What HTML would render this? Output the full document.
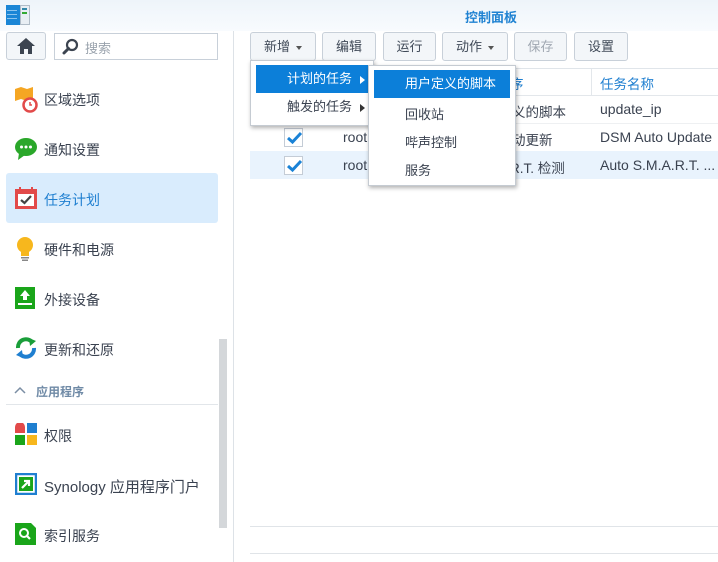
<!DOCTYPE html>
<html><head><meta charset="utf-8"><style>
*{margin:0;padding:0;box-sizing:border-box}
body{width:718px;height:562px;overflow:hidden;background:#fff;font-family:"Liberation Sans","Noto Sans CJK SC",sans-serif;font-size:13px;color:#404a58;position:relative}
.a{position:absolute}
.title{left:0;top:0;width:718px;height:31px;background:linear-gradient(#eef4fa,#f8fbfe)}
.btn{position:absolute;top:32px;height:29px;border:1px solid #c8d0d9;border-radius:3px;background:#f3f6f9;line-height:27px;text-align:center;font-size:13px;color:#404a58}
.car{display:inline-block;width:0;height:0;border-left:3.5px solid transparent;border-right:3.5px solid transparent;border-top:4px solid #555;vertical-align:middle;margin-left:6px}
.nav{position:absolute;left:44px;font-size:14px;color:#3a4250}
.ic{position:absolute;left:15px;width:22px;height:22px}
.menu{background:#fff;border:1px solid #c5cbd2;box-shadow:1px 2px 4px rgba(0,0,0,.3)}
.tri{display:inline-block;width:0;height:0;border-top:4px solid transparent;border-bottom:4px solid transparent;border-left:5px solid #333;margin-left:8px;vertical-align:middle}
.cb{position:absolute;left:284px;width:19px;height:19px;border:1px solid #c4ccd6;background:#fff}
.row{position:absolute;left:250px;width:468px;height:28px}
.cell{position:absolute;font-size:13.5px;color:#3a4250}
</style></head><body>
<div class="a title"></div>
<!-- app icon -->
<div class="a" style="left:6px;top:5px;width:18px;height:20px;background:#1b86d6"></div>
<div class="a" style="left:7px;top:10px;width:10px;height:1px;background:#8cc4ee"></div>
<div class="a" style="left:7px;top:14px;width:10px;height:1px;background:#8cc4ee"></div>
<div class="a" style="left:7px;top:18px;width:10px;height:1px;background:#8cc4ee"></div>
<div class="a" style="left:20px;top:5px;width:10px;height:20px;background:#e8eef4;border:1px solid #b0bcc8"></div>
<div class="a" style="left:22px;top:8px;width:5px;height:2px;background:#38a;"></div>
<div class="a" style="left:22px;top:12px;width:5px;height:2px;background:#3a3"></div>
<div class="a" style="left:491px;top:7px;transform:translateX(-50%);font-size:13px;font-weight:bold;color:#1f82d2;white-space:nowrap">控制面板</div>

<!-- left top -->
<div class="a" style="left:6px;top:32px;width:40px;height:28px;border:1px solid #c8d0d9;border-radius:3px;background:#f3f6f9"></div>
<svg class="a" style="left:16px;top:37px" width="20" height="18" viewBox="0 0 20 18"><path d="M10 1 L1 9 H4 V17 H8 V12 H12 V17 H16 V9 H19 Z" fill="#3c4450"/></svg>
<div class="a" style="left:54px;top:33px;width:164px;height:27px;border:1px solid #c8d0d9;background:#fff"></div>
<svg class="a" style="left:62px;top:38px" width="17" height="17" viewBox="0 0 17 17"><circle cx="10" cy="7" r="5" fill="none" stroke="#3c4450" stroke-width="2.2"/><path d="M6.5 10.5 L2 15" stroke="#3c4450" stroke-width="3" stroke-linecap="round"/></svg>
<div class="a" style="left:85px;top:38px;color:#9aa3ad;font-size:13px">搜索</div>

<!-- nav -->
<div class="a" style="left:6px;top:173px;width:212px;height:50px;background:#d9ecfd;border-radius:3px"></div>
<div class="ic" style="top:87px"><svg width="24" height="26" viewBox="0 0 24 26"><path d="M0 2 L6 0 L12 2 L18 0 V12 L12 14 L6 12 L0 14Z" fill="#f5a623"/><circle cx="15" cy="18" r="6.5" fill="#fff" stroke="#e24a4a" stroke-width="2.5"/><path d="M15 15 V18 H17" stroke="#e24a4a" stroke-width="1.5" fill="none"/></svg></div>
<div class="nav" style="top:90px">区域选项</div>
<div class="ic" style="top:137px"><svg width="24" height="24" viewBox="0 0 24 24"><ellipse cx="11" cy="10" rx="11" ry="9" fill="#2aa72a"/><path d="M4 16 L3 23 L10 18Z" fill="#2aa72a"/><circle cx="6.5" cy="10" r="1.5" fill="#fff"/><circle cx="11" cy="10" r="1.5" fill="#fff"/><circle cx="15.5" cy="10" r="1.5" fill="#fff"/></svg></div>
<div class="nav" style="top:140px">通知设置</div>
<div class="ic" style="top:187px"><svg width="24" height="24" viewBox="0 0 24 24"><rect x="0" y="2" width="22" height="20" fill="#e24a4a"/><rect x="3" y="7" width="16" height="12" fill="#fff"/><rect x="4" y="0" width="2" height="4" fill="#e24a4a"/><rect x="16" y="0" width="2" height="4" fill="#e24a4a"/><path d="M6 13 L9.5 16 L16 9" stroke="#444" stroke-width="2.2" fill="none"/></svg></div>
<div class="nav" style="top:190px;color:#1f7fd0">任务计划</div>
<div class="ic" style="top:236px"><svg width="24" height="26" viewBox="0 0 24 26"><circle cx="10" cy="9" r="8" fill="#f7b71d"/><rect x="6" y="15" width="8" height="5" fill="#f7b71d"/><rect x="6" y="21" width="8" height="1.5" fill="#888"/><rect x="7" y="23.5" width="6" height="1.5" fill="#888"/></svg></div>
<div class="nav" style="top:240px">硬件和电源</div>
<div class="ic" style="top:287px"><svg width="22" height="22" viewBox="0 0 22 22"><rect width="20" height="22" fill="#1aa51a"/><path d="M10 3 L15 9 H12 V13 H8 V9 H5Z" fill="#fff"/><rect x="3" y="16" width="14" height="2" fill="#fff"/></svg></div>
<div class="nav" style="top:290px">外接设备</div>
<div class="ic" style="top:337px"><svg width="24" height="22" viewBox="0 0 24 22"><path d="M3 11 A8 8 0 0 1 17 5" stroke="#1a9e3a" stroke-width="4" fill="none"/><path d="M14 1 L21 4 L15 9Z" fill="#1a9e3a"/><path d="M19 11 A8 8 0 0 1 5 17" stroke="#1f7fd0" stroke-width="4" fill="none"/><path d="M8 21 L1 18 L7 13Z" fill="#1f7fd0"/></svg></div>
<div class="nav" style="top:340px">更新和还原</div>
<svg class="a" style="left:14px;top:386px" width="12" height="8" viewBox="0 0 12 8"><path d="M1 7 L6 2 L11 7" stroke="#7b8ea4" stroke-width="1.5" fill="none"/></svg>
<div class="a" style="left:36px;top:383px;font-size:12px;font-weight:bold;color:#6f8aa6">应用程序</div>
<div class="a" style="left:6px;top:404px;width:212px;height:1px;background:#e2e6ea"></div>
<div class="ic" style="top:423px"><svg width="22" height="22" viewBox="0 0 22 22"><path d="M0 10 V4 A5 5 0 0 1 10 4 V10Z" fill="#e24a4a"/><rect x="12" y="0" width="10" height="10" fill="#1f7fd0"/><rect x="0" y="12" width="10" height="10" fill="#1aa51a"/><rect x="12" y="12" width="10" height="10" fill="#f7b71d"/></svg></div>
<div class="nav" style="top:426px">权限</div>
<div class="ic" style="top:473px"><svg width="22" height="22" viewBox="0 0 22 22"><rect x="1" y="1" width="20" height="20" fill="#fff" stroke="#1f7fd0" stroke-width="2.5"/><rect x="4" y="4" width="14" height="14" fill="#1aa51a"/><path d="M7 15 L13 9 M9 8 H14 V13" stroke="#fff" stroke-width="2.2" fill="none"/></svg></div>
<div class="nav" style="top:476px;font-size:15px">Synology 应用程序门户</div>
<div class="ic" style="top:523px"><svg width="22" height="22" viewBox="0 0 22 22"><path d="M0 0 H16 L21 5 V22 H0Z" fill="#1aa51a"/><circle cx="9" cy="10" r="4" fill="none" stroke="#fff" stroke-width="2"/><path d="M12 13 L15 16" stroke="#fff" stroke-width="2.2"/></svg></div>
<div class="nav" style="top:526px">索引服务</div>
<div class="a" style="left:219px;top:339px;width:8px;height:189px;background:#d4d7da"></div>
<div class="a" style="left:233px;top:31px;width:1px;height:531px;background:#dde2e7"></div>

<!-- toolbar -->
<div class="btn" style="left:250px;width:66px">新增<span class="car"></span></div>
<div class="btn" style="left:322px;width:54px">编辑</div>
<div class="btn" style="left:383px;width:53px">运行</div>
<div class="btn" style="left:442px;width:66px">动作<span class="car"></span></div>
<div class="btn" style="left:514px;width:53px;color:#a0a8b2">保存</div>
<div class="btn" style="left:574px;width:54px">设置</div>

<!-- table -->
<div class="a" style="left:250px;top:68px;width:468px;height:1px;background:#e0e5ea"></div>
<div class="a" style="left:250px;top:95px;width:468px;height:1px;background:#e3e7eb"></div>
<div class="a" style="left:591px;top:69px;width:1px;height:26px;background:#e3e7eb"></div>
<div class="cell" style="left:600px;top:73px;color:#1f7fd0">任务名称</div>
<div class="cell" style="left:510px;top:73px;color:#1f7fd0">序</div>
<div class="cell" style="left:512px;top:101px">义的脚本</div>
<div class="cell" style="left:600px;top:101px;font-size:14px">update_ip</div>
<div class="a" style="left:250px;top:123px;width:468px;height:1px;background:#eef0f2"></div>
<div class="cb" style="top:128px"></div>
<svg class="a" style="left:285px;top:128px" width="19" height="19" viewBox="0 0 19 19"><path d="M3 10 L7.5 14 L16 5" stroke="#1a82d6" stroke-width="3" fill="none"/></svg>
<div class="cell" style="left:343px;top:129px;font-size:14px">root</div>
<div class="cell" style="left:512px;top:129px">动更新</div>
<div class="cell" style="left:600px;top:129px;font-size:14px">DSM Auto Update</div>
<div class="row" style="top:151px;background:#e9f3fd"></div>
<div class="cb" style="top:156px"></div>
<svg class="a" style="left:285px;top:156px" width="19" height="19" viewBox="0 0 19 19"><path d="M3 10 L7.5 14 L16 5" stroke="#1a82d6" stroke-width="3" fill="none"/></svg>
<div class="cell" style="left:343px;top:157px;font-size:14px">root</div>
<div class="cell" style="left:510px;top:157px">R.T. 检测</div>
<div class="cell" style="left:600px;top:157px;font-size:14px">Auto S.M.A.R.T. ...</div>
<div class="a" style="left:250px;top:526px;width:468px;height:1px;background:#e0e4e8"></div>
<div class="a" style="left:250px;top:553px;width:468px;height:1px;background:#e0e4e8"></div>

<!-- menus -->
<div class="a menu" style="left:250px;top:60px;width:124px;height:66px"></div>
<div class="a" style="left:256px;top:65px;width:118px;height:28px;background:#0c7fd9;color:#fff;line-height:28px;padding-left:31px">计划的任务<span class="tri" style="border-left-color:#fff"></span></div>
<div class="a" style="left:256px;top:93px;width:118px;height:28px;line-height:28px;padding-left:31px;color:#3a4250">触发的任务<span class="tri"></span></div>
<div class="a menu" style="left:368px;top:65px;width:148px;height:121px"></div>
<div class="a" style="left:374px;top:70px;width:136px;height:28px;background:#0c7fd9;color:#fff;line-height:28px;padding-left:31px">用户定义的脚本</div>
<div class="a" style="left:405px;top:104px;color:#3a4250">回收站</div>
<div class="a" style="left:405px;top:132px;color:#3a4250">哔声控制</div>
<div class="a" style="left:405px;top:160px;color:#3a4250">服务</div>
</body></html>
